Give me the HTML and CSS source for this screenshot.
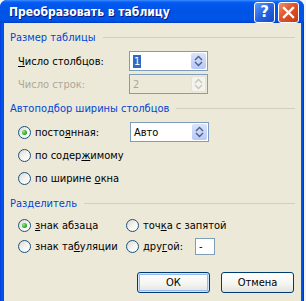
FILE: index.html
```html
<!DOCTYPE html>
<html>
<head>
<meta charset="utf-8">
<link rel="stylesheet" href="styles.css">
</head>
<body>
<div class="screen">
  <div class="window">
    <div class="titlebar">
      <span class="title">Преобразовать в таблицу</span>
      <div class="tbtns">
        <span class="tb help">?</span>
        <span class="tb close"><svg width="13" height="13" viewBox="0 0 13 13"><path d="M2 2 L11 11 M11 2 L2 11" stroke="#fff" stroke-width="2.4" stroke-linecap="square"/></svg></span>
      </div>
    </div>
    <div class="client">
      <div class="section"><span class="sec-label">Размер таблицы</span><span class="rule"></span></div>
      <div class="field-row first">
        <span class="flabel"><u>Ч</u>исло столбцов:</span>
        <div class="spin"><span class="val"><span class="sel">1</span></span><span class="spinbtn"><svg width="9" height="12" viewBox="0 0 9 12"><path d="M1 5 L4.5 1.5 L8 5 M1 7 L4.5 10.5 L8 7" fill="none" stroke="#4D6185" stroke-width="1.4"/></svg></span></div>
      </div>
      <div class="field-row">
        <span class="flabel disabled">Число строк:</span>
        <div class="spin dis"><span class="val">2</span><span class="spinbtn"><svg width="9" height="12" viewBox="0 0 9 12"><path d="M1 5 L4.5 1.5 L8 5 M1 7 L4.5 10.5 L8 7" fill="none" stroke="#C9C7BA" stroke-width="1.4"/></svg></span></div>
      </div>

      <div class="section s2"><span class="sec-label">Автоподбор ширины столбцов</span><span class="rule"></span></div>
      <div class="radio-row first">
        <span class="radio on"></span><span class="rlabel fixedw">посто<u>я</u>нная:</span>
        <div class="spin"><span class="val">Авто</span><span class="spinbtn"><svg width="9" height="12" viewBox="0 0 9 12"><path d="M1 5 L4.5 1.5 L8 5 M1 7 L4.5 10.5 L8 7" fill="none" stroke="#4D6185" stroke-width="1.4"/></svg></span></div>
      </div>
      <div class="radio-row"><span class="radio"></span><span class="rlabel">по содер<u>ж</u>имому</span></div>
      <div class="radio-row"><span class="radio"></span><span class="rlabel">по ширине <u>о</u>кна</span></div>

      <div class="section s3"><span class="sec-label">Разделитель</span><span class="rule"></span></div>
      <div class="sep-grid">
        <div class="radio-row"><span class="radio on"></span><span class="rlabel"><u>з</u>нак абзаца</span></div>
        <div class="radio-row"><span class="radio"></span><span class="rlabel">точ<u>к</u>а с запятой</span></div>
        <div class="radio-row"><span class="radio"></span><span class="rlabel">знак та<u>б</u>уляции</span></div>
        <div class="radio-row"><span class="radio"></span><span class="rlabel">дру<u>г</u>ой:</span><span class="small-input">-</span></div>
      </div>

      <div class="buttons">
        <span class="btn default">ОК</span>
        <span class="btn">Отмена</span>
      </div>
    </div>
  </div>
</div>
</body>
</html>
```
FILE: styles.css
```css
html, body {
  margin: 0;
  padding: 0;
  background: #ffffff;
}
body {
  font-family: "DejaVu Sans Condensed", "Liberation Sans", Arial, sans-serif;
  font-size: 11px;
  color: #000;
}
.screen {
  width: 306px;
  height: 301px;
  overflow: hidden;
  background: #f4f4f4;
}
.window {
  width: 304px;
  height: 330px;
  display: flex;
  flex-direction: column;
  background: linear-gradient(to right, #0831D9 0, #0055E5 1px, #0055EA 3px, #0046D8 4px, #0046D8 300px, #0055EA 301px, #0055E5 303px, #001EA0 304px);
  border-radius: 7px 7px 0 0;
}
.titlebar {
  height: 23px;
  flex: none;
  display: flex;
  align-items: center;
  justify-content: space-between;
  padding: 0 5px 0 9px;
  border-radius: 7px 7px 0 0;
  background: linear-gradient(to bottom, #3C8DFF 0, #0A5EF5 2px, #0058EE 4px, #0054E3 12px, #0055E8 18px, #0050E0 21px, #003DC5 23px);
}
.title {
  color: #fff;
  font-family: "DejaVu Sans Condensed", "DejaVu Sans", sans-serif;
  font-weight: bold;
  font-size: 12px;
  text-shadow: 1px 1px 0 #0A1883;
}
.tbtns {
  display: flex;
  gap: 3px;
  margin-top: 1px;
}
.tb {
  width: 19px;
  height: 19px;
  border: 1px solid #fff;
  border-radius: 3px;
  display: flex;
  align-items: center;
  justify-content: center;
  box-sizing: content-box;
}
.help {
  background: linear-gradient(135deg, #5C9CFF 0, #2663E0 50%, #1848C8 100%);
  color: #fff;
  font-family: "DejaVu Sans", sans-serif;
  font-weight: bold;
  font-size: 15px;
}
.close {
  background: linear-gradient(135deg, #F09070 0, #E0542A 45%, #C83A12 100%);
}
.client {
  flex: 1;
  margin: 0 3px 0 4px;
  background: #ECE9D8;
  padding: 8px 6px 0 6px;
}
.section {
  display: flex;
  align-items: center;
  gap: 7px;
  height: 13px;
  color: #0046D5;
}
.section .rule {
  flex: 1;
  height: 1px;
  background: #D0D0BF;
}
.section.s2 { margin-top: 8px; }
.section.s3 { margin-top: 9px; }

.field-row {
  display: flex;
  align-items: center;
  height: 20px;
  padding-left: 8px;
  margin-top: 3px;
}
.field-row.first { margin-top: 7px; }
.flabel { width: 111px; }
.disabled { color: #ACA899; }

.spin {
  width: 77px;
  height: 18px;
  border: 1px solid #7F9DB9;
  background: #fff;
  display: flex;
  align-items: center;
  justify-content: space-between;
}
.spin.dis { background: #ECE9D8; color: #ACA899; }
.spin .val { padding-left: 3px; }
.sel { background: #316AC5; color: #fff; padding: 0 1px; }
.spinbtn {
  width: 15px;
  height: 16px;
  margin-right: 1px;
  border-radius: 2px;
  background: linear-gradient(to bottom, #DAE3FD, #B6C9F7);
  display: flex;
  align-items: center;
  justify-content: center;
}
.spin.dis .spinbtn { background: #F4F3EE; border: 1px solid #E6E4D8; box-sizing: border-box; }

.radio-row {
  display: flex;
  align-items: center;
  height: 20px;
  padding-left: 8px;
  margin-top: 3px;
}
.radio-row.first { margin-top: 7px; }
.radio {
  width: 11px;
  height: 11px;
  border: 1px solid #1C5180;
  border-radius: 50%;
  background: linear-gradient(135deg, #DCD9CF 0, #F6F5F2 55%, #FFFFFF 100%);
  margin-right: 4px;
  display: flex;
  align-items: center;
  justify-content: center;
  flex: none;
}
.radio.on::after {
  content: "";
  width: 5px;
  height: 5px;
  border-radius: 50%;
  background: radial-gradient(circle at 35% 35%, #A0EA8E 0, #2EB52E 50%, #1A8F1A 100%);
}
.rlabel.fixedw { width: 95px; }

.sep-grid {
  display: grid;
  grid-template-columns: 116px auto;
  margin-top: 5px;
}
.sep-grid .radio-row { margin-top: 0; height: 21px; }
.sep-grid .radio-row:nth-child(2) { padding-left: 0; }
.sep-grid .radio-row:nth-child(4) { padding-left: 0; }
.small-input {
  margin-left: 12px;
  width: 15px;
  height: 15px;
  border: 1px solid #7F9DB9;
  background: #fff;
  padding-left: 3px;
  line-height: 15px;
}

.buttons {
  display: flex;
  justify-content: flex-end;
  gap: 11px;
  margin-top: 15px;
  margin-right: 1px;
}
.btn {
  width: 71px;
  height: 19px;
  border: 1px solid #003C74;
  border-radius: 3px;
  background: linear-gradient(to bottom, #FFFFFF 0, #F4F4F0 60%, #E3E2DA 100%);
  display: flex;
  align-items: center;
  justify-content: center;
  box-sizing: content-box;
}
.btn.default {
  box-shadow: inset 0 0 0 1px #CEE7FF, inset 0 0 0 2px #98B8F0;
}
```
